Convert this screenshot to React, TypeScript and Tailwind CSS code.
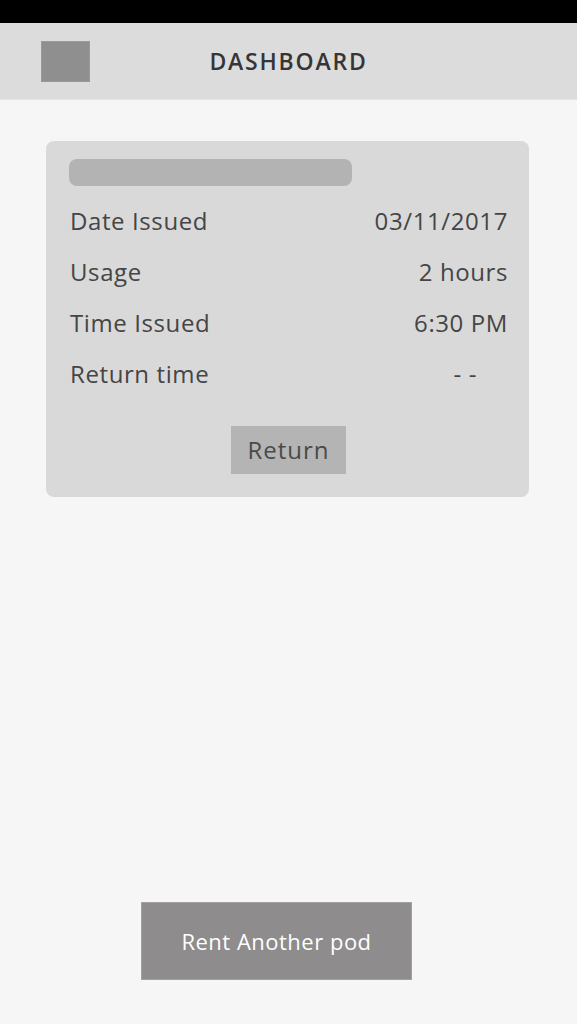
const rows = [
  { label: "Date Issued", value: "03/11/2017" },
  { label: "Usage", value: "2 hours" },
  { label: "Time Issued", value: "6:30 PM" },
  { label: "Return time", value: "- -", pad: true },
];

export default function App() {
  return (
    <div
      className="flex flex-col h-[1024px] w-full bg-[#f6f6f6] text-[#454545]"
      style={{ fontFamily: '"Open Sans", "Liberation Sans", sans-serif' }}
    >
      <div className="h-[23px] bg-black" />
      <header className="relative flex items-center h-[77px] bg-[#dcdcdc] border-b border-[#e6e6e6]">
        <div className="ml-[41px] w-[49px] h-[41px] bg-[#8f8f8f] border border-[#999]" />
        <h1 className="absolute inset-x-0 text-center text-[23px] font-semibold tracking-[1.8px] text-[#353535]">
          DASHBOARD
        </h1>
      </header>

      <main className="flex-1 flex flex-col px-[46px] pr-[48px]">
        <section className="mt-[41px] rounded-lg bg-[#d9d9d9] pt-[18px] pb-[23px] pl-[23px] pr-[21px]">
          <div className="w-[283px] h-[27px] rounded-lg bg-[#b3b3b3]" />
          <div className="mt-[9px]">
            {rows.map((r) => (
              <div key={r.label} className="flex justify-between text-[24px] tracking-[0.6px] leading-[51px]">
                <span className="pl-px">{r.label}</span>
                <span className={r.pad ? "pr-[31px]" : ""}>{r.value}</span>
              </div>
            ))}
          </div>
          <div className="flex justify-center mt-[27px]">
            <button className="w-[115px] h-[48px] bg-[#b4b4b4] text-[24px] tracking-[1px] text-[#4a4a4a]">
              Return
            </button>
          </div>
        </section>

        <div className="mt-auto mb-[44px] flex">
          <button className="ml-[95px] w-[271px] h-[78px] bg-[#8e8c8c] text-white text-[22px] tracking-[0.5px] border border-[#a0a0a0]">
            Rent Another pod
          </button>
        </div>
      </main>
    </div>
  );
}
